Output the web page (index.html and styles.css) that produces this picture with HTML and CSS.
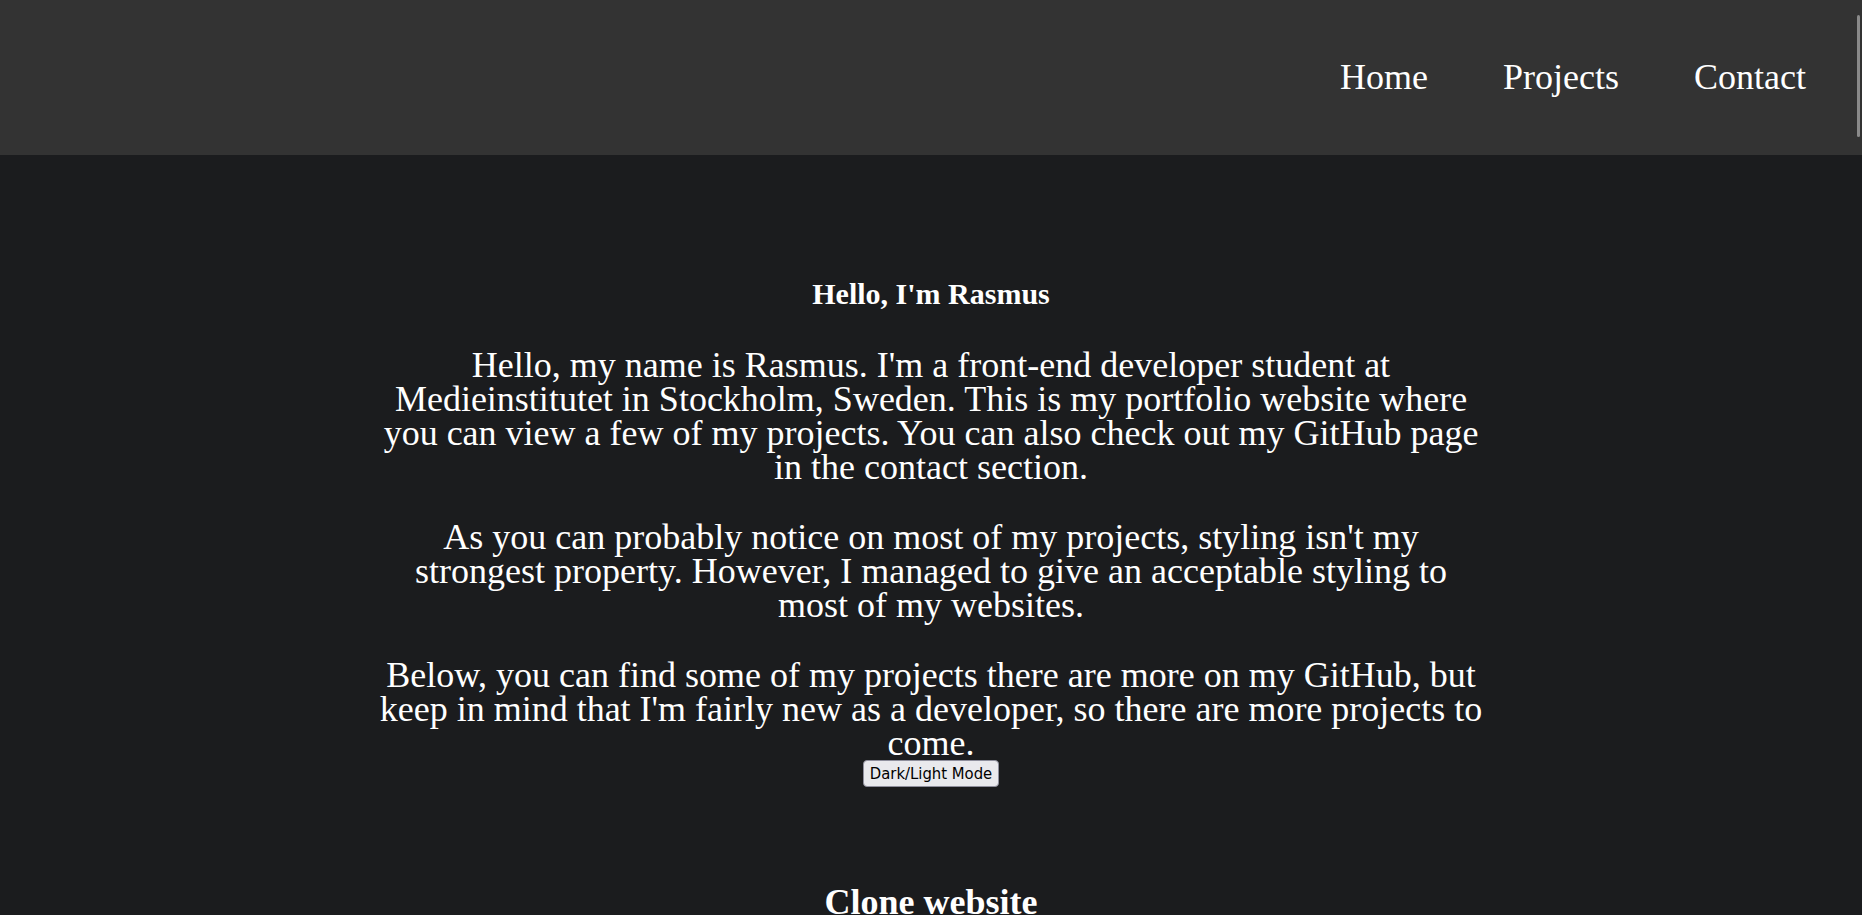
FILE: index.html
```html
<!DOCTYPE html>
<html lang="en">
<head>
<meta charset="utf-8">
<title>Rasmus Portfolio</title>
<link rel="stylesheet" href="styles.css">
</head>
<body>
<header class="site-header">
  <nav class="nav">
    <a class="nav-link" href="#">Home</a>
    <a class="nav-link" href="#">Projects</a>
    <a class="nav-link" href="#">Contact</a>
  </nav>
  <div class="scroll-thumb"></div>
</header>
<main class="main">
  <section class="intro">
    <h2 class="intro-title">Hello, I'm Rasmus</h2>
    <p class="intro-text">Hello, my name is Rasmus. I'm a front-end developer student at Medieinstitutet in Stockholm, Sweden. This is my portfolio website where you can view a few of my projects. You can also check out my GitHub page in the contact section.</p>
    <p class="intro-text">As you can probably notice on most of my projects, styling isn't my strongest property. However, I managed to give an acceptable styling to most of my websites.</p>
    <p class="intro-text intro-last">Below, you can find some of my projects there are more on my GitHub, but keep in mind that I'm fairly new as a developer, so there are more projects to come.</p>
    <button class="mode-btn" type="button">Dark/Light Mode</button>
  </section>
  <section class="project">
    <h2 class="project-title">Clone website</h2>
  </section>
</main>
</body>
</html>
```
FILE: styles.css
```css
html, body {
  margin: 0;
  padding: 0;
}
body {
  background: #1b1c1e;
  color: #ffffff;
  font-family: "Liberation Serif", "Times New Roman", serif;
  overflow: hidden;
}
.site-header {
  position: relative;
  height: 155px;
  background: #333333;
  display: flex;
  align-items: center;
  justify-content: flex-end;
  padding-right: 56px;
}
.nav {
  display: flex;
  gap: 75px;
  margin-top: -2px;
}
.nav-link {
  color: #ffffff;
  text-decoration: none;
  font-size: 36px;
}
.scroll-thumb {
  position: absolute;
  right: 2px;
  top: 15px;
  width: 3px;
  height: 122px;
  border-radius: 2px;
  background: #8a8a8a;
}
.main {
  display: flex;
  flex-direction: column;
  align-items: center;
}
.intro {
  width: 1110px;
  display: flex;
  flex-direction: column;
  align-items: center;
  text-align: center;
  padding-top: 121px;
}
.intro-title {
  margin: 0;
  font-size: 30px;
  font-weight: bold;
  line-height: 36px;
}
.intro-text {
  margin: 36px 0 0;
  font-size: 36px;
  line-height: 34px;
}
.intro-last {
  margin-bottom: 0;
}
.mode-btn {
  margin-top: 0;
  font-family: "DejaVu Sans Condensed", "DejaVu Sans", Verdana, sans-serif;
  font-size: 16.5px;
  color: #000000;
  background: #e9e9ed;
  border: 1px solid #8f8f9d;
  border-radius: 4px;
  padding: 1px 6px;
  height: 27px;
  line-height: 23px;
}
.project {
  padding-top: 94px;
}
.project-title {
  margin: 0;
  font-size: 36px;
  font-weight: bold;
  line-height: 42px;
}
```
